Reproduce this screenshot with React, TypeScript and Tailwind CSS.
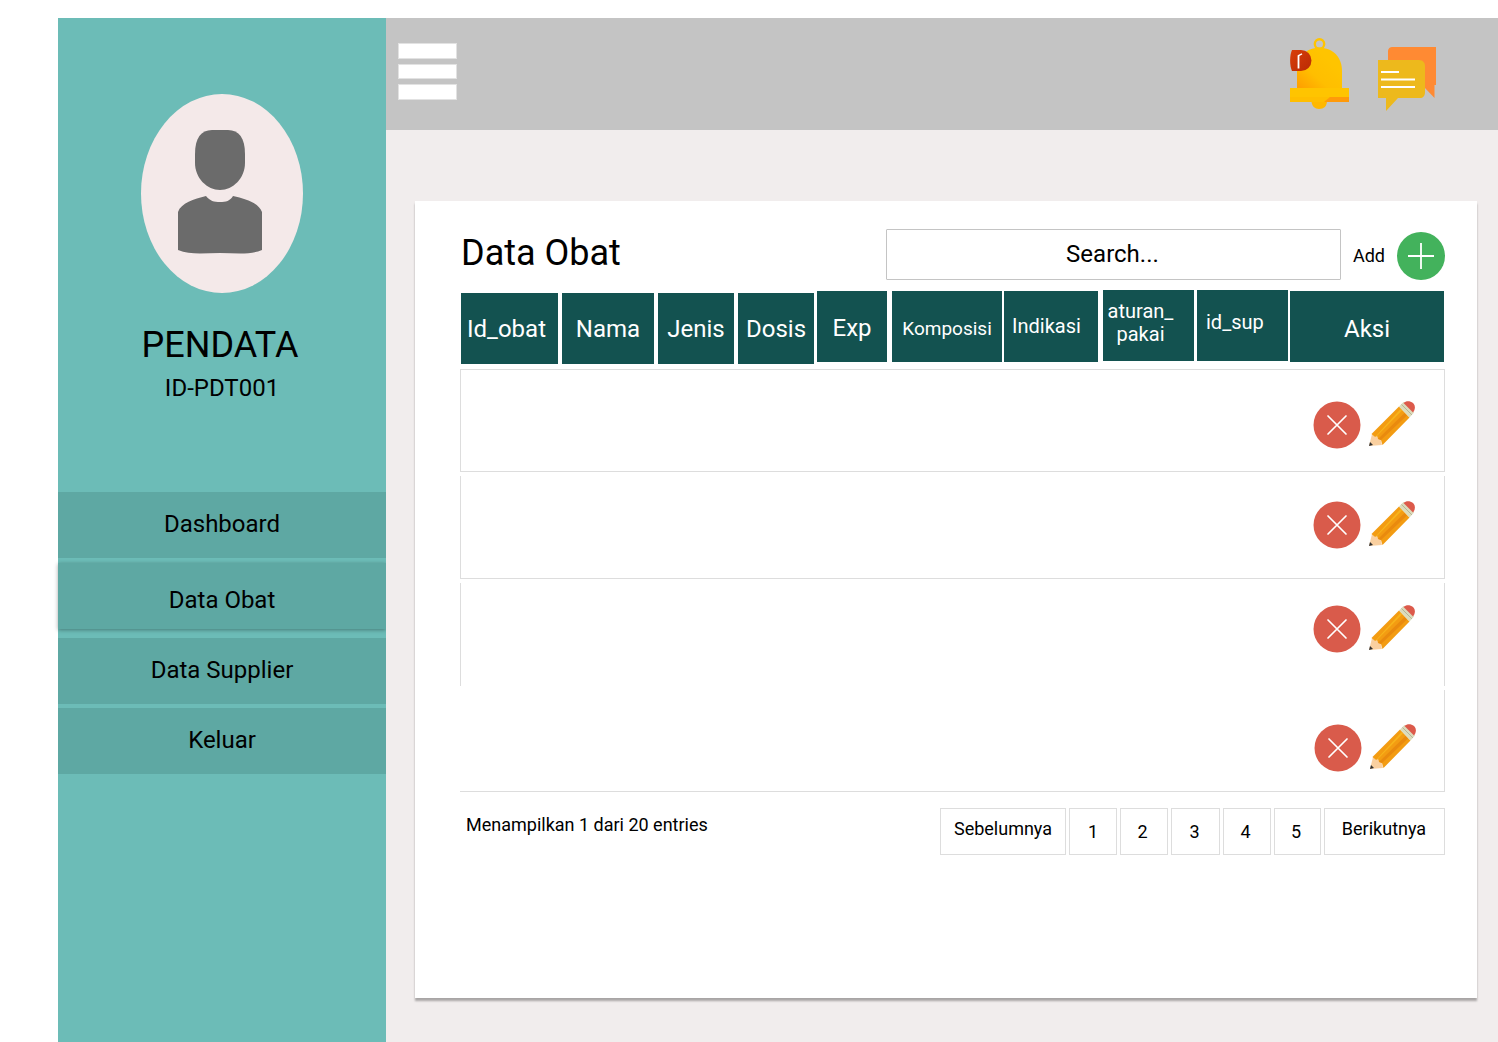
import React from "react";

function Bell() {
  return (
    <svg width="70" height="80" viewBox="0 0 70 80" className="shrink-0">
      <defs>
        <linearGradient id="bellBody" x1="0" y1="1" x2="0.7" y2="0.3">
          <stop offset="0" stopColor="#ff9d00" />
          <stop offset="0.5" stopColor="#ffbe00" />
          <stop offset="1" stopColor="#ffc400" />
        </linearGradient>
        <linearGradient id="bellBadge" x1="0" y1="0" x2="1" y2="1">
          <stop offset="0" stopColor="#d93f0a" />
          <stop offset="1" stopColor="#b92a04" />
        </linearGradient>
      </defs>
      <circle cx="34.500" cy="9" r="4.700" fill="none" stroke="#ffc400" strokeWidth="2.400" />
      <path d="M12 53V36C12 22 21 12.700 34 12.700C49 12.700 57 23 57 36V53Z" fill="url(#bellBody)" />
      <path d="M26.500 66H42C42 71 39 74 34 74C30 74 26.500 71 26.500 66Z" fill="#ffb800" />
      <path d="M5 53H64V67H5Z" fill="#ffbe00" />
      <path d="M5 53H64V62H5Z" fill="#ffc400" />
      <path d="M45 62H64V67H39Z" fill="#ff9a0a" />
      <path d="M7 15H16A10.500 10.500 0 0 1 16 36H7C4.500 31 4.500 20 7 15Z" fill="url(#bellBadge)" />
      <path d="M13.500 33.500V20.500" stroke="#ffffff" strokeWidth="1.800" />
      <path d="M13 20.800L17 18.800" stroke="#ffffff" strokeWidth="1.500" />
    </svg>
  );
}

function Chat() {
  return (
    <svg width="62" height="70" viewBox="0 0 62 70" className="shrink-0">
      <path d="M13 10C13 6 15 5 18 5H61V43H59.500V56L50 46H13Z" fill="#ff8a33" />
      <path d="M3 18H44C48 18 50 21 50 24V50C50 54 48 56 45 56H23L11 69V56H3Z" fill="#edb91c" />
      <rect x="6" y="29" width="18" height="2" fill="#fff" />
      <rect x="6" y="36.500" width="34" height="2" fill="#fff" />
      <rect x="6" y="44" width="34" height="2" fill="#fff" />
    </svg>
  );
}

function Person() {
  return (
    <svg width="84" height="124" viewBox="0 0 84 124" className="block">
      <path d="M17 0H33C44 0 50 8 50 24V33C50 48 38 60 25 60C12 60 0 48 0 33V24C0 8 6 0 17 0Z" transform="translate(17 0)" fill="#6b6b6b" />
      <path d="M0 82C3 73 16 69 28 66C32 71 36 72 42 72C48 72 52 71 55 66C68 69 81 73 84 82V120C72 125 58 123 42 123C26 123 12 125 0 120Z" fill="#6b6b6b" />
    </svg>
  );
}

function Pencil() {
  return (
    <svg width="46" height="45" viewBox="0 0 46 45" className="shrink-0">
      <path d="M0 45L3 33L6 36L8 35L9 38L12 39L13 44Z" fill="#fad0a0" />
      <path d="M0 45L1 41L4 44Z" fill="#333333" />
      <path d="M2.500 33L30 5.500L40.500 16.500L13.500 44L12 39L9 38L8 35L6 36Z" fill="#f39c12" />
      <path d="M6 36L8 35L33 9.500L31.500 8Z" fill="#f7b31c" />
      <path d="M9 38L12 39L38 14.500L35.500 12Z" fill="#e98a0e" />
      <path d="M30 5.500L34.500 1L45 11.500L40.500 16.500Z" fill="#dcdcbc" />
      <path d="M32.500 3.500L43 14" stroke="#b5b59a" strokeWidth="1" />
      <path d="M34.500 2C37 -0.500 41 -0.500 44 2C46.500 4.500 46.500 8.500 44 11.500Z" fill="#dc5a4b" />
    </svg>
  );
}

function Cancel() {
  return (
    <svg width="48" height="48" viewBox="0 0 48 48" className="shrink-0">
      <circle cx="24" cy="24" r="23.500" fill="#d95b4b" />
      <path d="M15 15L33 33M33 15L15 33" stroke="#fff" strokeWidth="1.700" strokeLinecap="round" />
    </svg>
  );
}

function RowActions({ offset }: { offset: string }) {
  return (
    <div className={"ml-auto flex items-start gap-[8px] " + offset}>
      <Cancel />
      <Pencil />
    </div>
  );
}

const menu = [
  { label: "Dashboard", cls: "mt-0 pb-[2px]" },
  { label: "Data Obat", cls: "mt-[5px] shadow-[0_1px_4px_rgba(0,0,0,0.35)] pt-[7px]" },
  { label: "Data Supplier", cls: "mt-[9px] pb-[2px]" },
  { label: "Keluar", cls: "mt-[4px] pb-[2px]" },
];

const pages = [
  { t: "Sebelumnya", w: "w-[126px]", c: "pb-[7px]" },
  { t: "1", w: "w-[48px]", c: "" },
  { t: "2", w: "w-[48px]", c: "pr-[3px]" },
  { t: "3", w: "w-[49px]", c: "pr-[2px]" },
  { t: "4", w: "w-[48px]", c: "pr-[3px]" },
  { t: "5", w: "w-[47px]", c: "pr-[3px]" },
  { t: "Berikutnya", w: "w-[121px]", c: "pb-[7px] pr-[1px]" },
];

export default function App() {
  return (
    <div className="flex h-[1042px] w-[1498px] overflow-hidden bg-white pt-[18px] pl-[58px] font-['Roboto',sans-serif] text-black">
      <aside className="flex h-[1024px] w-[328px] shrink-0 flex-col bg-[#6cbcb7]">
        <div className="ml-[83px] mt-[76px] flex h-[199px] w-[162px] justify-center rounded-[50%] bg-[#f4e9e9] pt-[36px] pr-[4px]">
          <Person />
        </div>
        <div className="mt-[29px] text-center text-[36px] leading-[46px] pr-[4px]">PENDATA</div>
        <div className="mt-[4px] text-center text-[24px] leading-[32px]">ID-PDT001</div>
        <nav className="mt-[88px] flex flex-col">
          {menu.map((m) => (
            <div key={m.label} className={"flex h-[66px] items-center justify-center bg-[#5ea8a3] text-[24px] " + m.cls}>
              {m.label}
            </div>
          ))}
        </nav>
      </aside>
      <main className="flex h-[1024px] min-w-0 flex-1 flex-col bg-[#f1eded]">
        <header className="flex h-[112px] shrink-0 bg-[#c4c4c4]">
          <div className="ml-[12px] mt-[25px] flex w-[59px] flex-col gap-[5px]">
            <div className="h-[16px] border border-[#e2e2e2] bg-white" />
            <div className="h-[15px] border border-[#e2e2e2] bg-white" />
            <div className="h-[16px] border border-[#e2e2e2] bg-white" />
          </div>
          <div className="ml-auto mr-[61px] mt-[17px] flex items-start gap-[21px]">
            <Bell />
            <div className="mt-[7px] -ml-[1px]"><Chat /></div>
          </div>
        </header>
        <section className="ml-[29px] mt-[71px] h-[797px] w-[1062px] bg-white pl-[46px] shadow-[0_3px_2px_rgba(0,0,0,0.3)]">
          <div className="flex h-[90px] items-start pr-[32px]">
            <h1 className="mt-[29px] w-[425px] text-[36px] font-normal leading-[46px]">Data Obat</h1>
            <div className="mt-[28px] flex h-[51px] w-[455px] items-center justify-center rounded-[1px] border border-[#c4c4c4] pb-[2px] pr-[2px] text-[24px]">Search...</div>
            <div className="ml-[12px] mt-[43px] text-[18px] leading-[24px]">Add</div>
            <svg width="48" height="48" viewBox="0 0 48 48" className="ml-[12px] mt-[31px] shrink-0">
              <circle cx="24" cy="24" r="24" fill="#43b25c" />
              <path d="M24 11V37M11 24H37" stroke="#fff" strokeWidth="1.800" />
            </svg>
          </div>
          <div className="flex h-[73px] items-start text-white">
            <div className="mt-[2px] flex h-[71px] w-[97px] items-center justify-center bg-[#135250] pr-[6px] text-[24px]">Id_obat</div>
            <div className="ml-[4px] mt-[2px] flex h-[71px] w-[92px] items-center justify-center bg-[#135250] text-[24px]">Nama</div>
            <div className="ml-[4px] mt-[2px] flex h-[71px] w-[76px] items-center justify-center bg-[#135250] text-[24px]">Jenis</div>
            <div className="ml-[4px] mt-[2px] flex h-[71px] w-[76px] items-center justify-center bg-[#135250] text-[24px]">Dosis</div>
            <div className="ml-[3px] flex h-[71px] w-[70px] items-center justify-center bg-[#135250] pt-[2px] text-[24px]">Exp</div>
            <div className="ml-[5px] flex h-[71px] w-[110px] items-center justify-center bg-[#135250] pt-[5px] text-[19px]">Komposisi</div>
            <div className="ml-[2px] flex h-[71px] w-[94px] items-center bg-[#135250] pl-[8px] pb-[2px] text-[20px]">Indikasi</div>
            <div className="ml-[5px] -mt-[1px] flex h-[71px] w-[91px] flex-col items-center bg-[#135250] pt-[10px] pr-[16px] text-[20px] leading-[23px]">
              <span>aturan_</span>
              <span>pakai</span>
            </div>
            <div className="ml-[3px] -mt-[1px] flex h-[71px] w-[91px] items-center bg-[#135250] pb-[7px] pl-[9px] text-[20px]">id_sup</div>
            <div className="ml-[2px] flex h-[71px] w-[154px] items-center justify-center bg-[#135250] pt-[5px] text-[24px]">Aksi</div>
          </div>
          <div className="-ml-[1px] mt-[5px] flex w-[985px] flex-col">
            <div className="flex h-[103px] border border-[#dddddd] pr-[29px]"><RowActions offset="mt-[31px]" /></div>
            <div className="mt-[4px] flex h-[103px] border-x border-b border-[#dddddd] pr-[29px]"><RowActions offset="mt-[25px]" /></div>
            <div className="mt-[4px] flex h-[103px] border-x border-[#dddddd] pr-[29px]"><RowActions offset="mt-[22px]" /></div>
            <div className="mt-[4px] flex h-[102px] border-r border-b border-[#dddddd] pr-[28px]"><RowActions offset="mt-[34px]" /></div>
          </div>
          <div className="flex items-start">
            <div className="ml-[5px] mt-[21px] w-[474px] text-[18px] leading-[24px]">Menampilkan 1 dari 20 entries</div>
            <div className="mt-[16px] flex gap-[3px]">
              {pages.map((p) => (
                <div key={p.t} className={"flex h-[47px] items-center justify-center border border-[#dddddd] text-[18px] " + p.w + " " + p.c}>
                  {p.t}
                </div>
              ))}
            </div>
          </div>
        </section>
      </main>
    </div>
  );
}
